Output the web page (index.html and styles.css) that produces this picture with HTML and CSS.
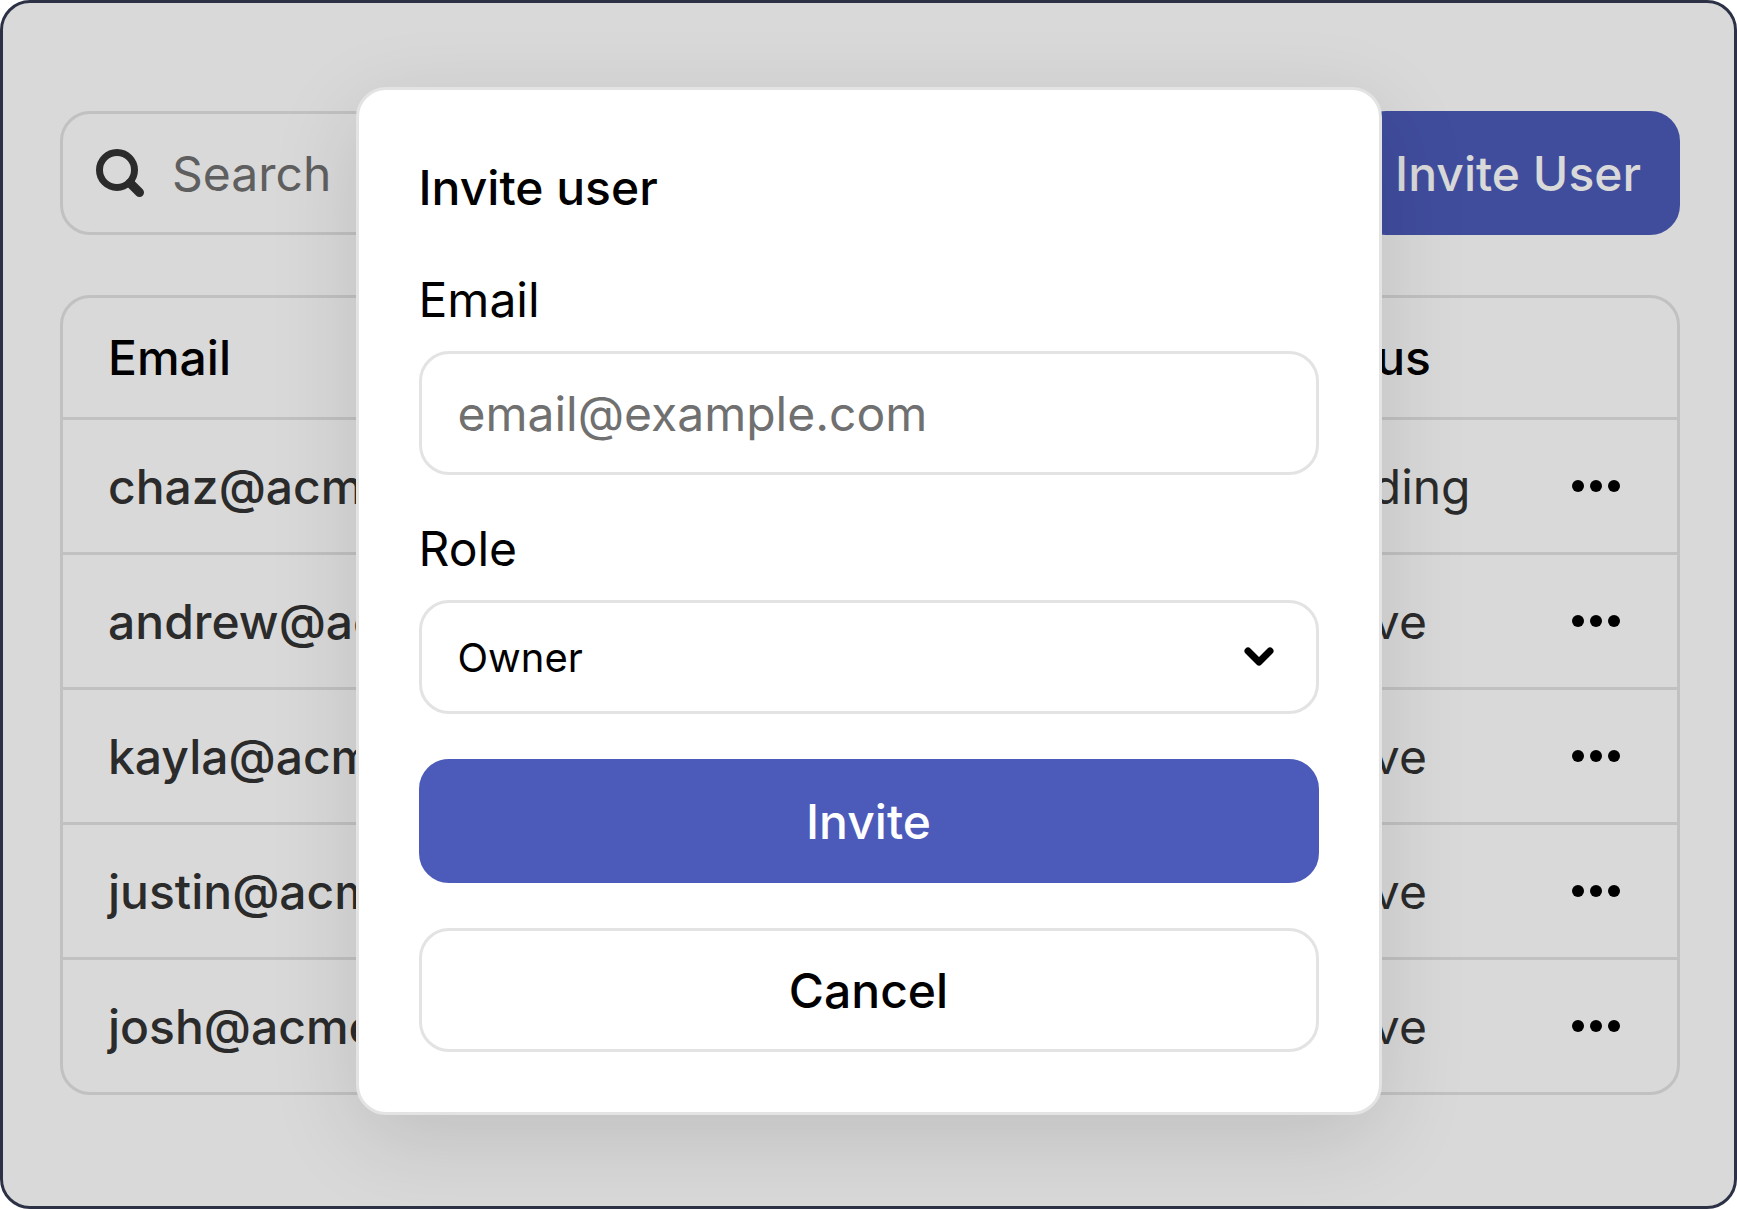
FILE: index.html
```html
<!DOCTYPE html>
<html lang="en">
<head>
	<meta charset="utf-8">
	<meta name="viewport" content="width=device-width, initial-scale=1">
	<title>Users</title>
	<link rel="stylesheet" href="styles.css">
</head>
<body>
	<div class="frame">
		<!-- users page -->
		<main class="page">
			<div class="toolbar">
				<label class="search">
					<svg class="search-icon" viewBox="0 0 48 48" aria-hidden="true">
						<circle cx="21" cy="21" r="17.5" />
						<path d="M34 34l9.5 9.5" class="handle" />
					</svg>
					<input type="search" placeholder="Search" aria-label="Search">
				</label>
				<button type="button" class="btn btn-primary">Invite User</button>
			</div>
			<div class="table-box">
				<table class="users">
					<thead>
						<tr>
							<th class="col-email">Email</th>
							<th class="col-status">Status</th>
							<th class="col-menu"></th>
						</tr>
					</thead>
					<tbody>
						<tr>
							<td class="email">chaz@acme.com</td>
							<td>Pending</td>
							<td><button type="button" class="more" aria-label="More"><svg viewBox="0 0 48 12"><circle cx="6" cy="6" r="6" /><circle cx="24" cy="6" r="6" /><circle cx="42" cy="6" r="6" /></svg></button></td>
						</tr>
						<tr>
							<td class="email">andrew@acme.com</td>
							<td>Active</td>
							<td><button type="button" class="more" aria-label="More"><svg viewBox="0 0 48 12"><circle cx="6" cy="6" r="6" /><circle cx="24" cy="6" r="6" /><circle cx="42" cy="6" r="6" /></svg></button></td>
						</tr>
						<tr>
							<td class="email">kayla@acme.com</td>
							<td>Active</td>
							<td><button type="button" class="more" aria-label="More"><svg viewBox="0 0 48 12"><circle cx="6" cy="6" r="6" /><circle cx="24" cy="6" r="6" /><circle cx="42" cy="6" r="6" /></svg></button></td>
						</tr>
						<tr>
							<td class="email">justin@acme.com</td>
							<td>Active</td>
							<td><button type="button" class="more" aria-label="More"><svg viewBox="0 0 48 12"><circle cx="6" cy="6" r="6" /><circle cx="24" cy="6" r="6" /><circle cx="42" cy="6" r="6" /></svg></button></td>
						</tr>
						<tr>
							<td class="email">josh@acme.com</td>
							<td>Active</td>
							<td><button type="button" class="more" aria-label="More"><svg viewBox="0 0 48 12"><circle cx="6" cy="6" r="6" /><circle cx="24" cy="6" r="6" /><circle cx="42" cy="6" r="6" /></svg></button></td>
						</tr>
					</tbody>
				</table>
			</div>
		</main>

		<!-- invite dialog -->
		<div class="overlay">
			<form class="dialog" role="dialog" aria-labelledby="dialog-title">
				<h2 id="dialog-title">Invite user</h2>
				<div class="field">
					<label for="email">Email</label>
					<input type="email" id="email" class="control" placeholder="email@example.com">
				</div>
				<div class="field">
					<label for="role">Role</label>
					<div class="select">
						<select id="role" class="control">
							<option>Owner</option>
							<option>Admin</option>
							<option>Member</option>
						</select>
						<svg class="chevron" viewBox="0 0 32 20" aria-hidden="true">
							<path d="M5 5l11 11L27 5" />
						</svg>
					</div>
				</div>
				<button type="button" class="btn btn-primary">Invite</button>
				<button type="button" class="btn">Cancel</button>
			</form>
		</div>
	</div>
</body>
</html>
```
FILE: styles.css
```css
* {
	box-sizing: border-box;
	margin: 0;
	padding: 0;
}

body {
	background-color: #fff;
	color: #000;
	font-family: Inter, "Liberation Sans", sans-serif;
	font-size: 48px;
}

input,
select,
button {
	font: inherit;
	color: inherit;
	outline: none;
}

input::placeholder {
	color: #707070;
	opacity: 1;
}

.frame {
	position: relative;
	min-height: 100vh;
	border: 3px solid #2d3145;
	border-radius: 30px;
	overflow: hidden;
}

.page {
	padding: 108px 54px 60px 57px;
}

/* toolbar */
.toolbar {
	display: flex;
	gap: 45px;
	margin-bottom: 60px;
}

.search {
	flex: 1;
	display: flex;
	align-items: center;
	gap: 28px;
	height: 124px;
	padding: 0 33px;
	border: 3px solid #e3e3e3;
	border-radius: 30px;
}

.search input {
	flex: 1;
	min-width: 0;
	border: 0;
	background: none;
}

.search-icon {
	width: 48px;
	height: 48px;
	fill: none;
	stroke: #333;
	stroke-width: 7;
	stroke-linecap: round;
}

.search-icon .handle {
	stroke-width: 9;
}

.btn {
	height: 124px;
	padding: 0 36px;
	border: 3px solid #e3e3e3;
	border-radius: 30px;
	background-color: #fff;
	font-weight: 500;
	cursor: pointer;
}

.btn-primary {
	border-color: #4c5bb9;
	background-color: #4c5bb9;
	color: #fff;
}

/* users table */
.table-box {
	border: 3px solid #e3e3e3;
	border-radius: 30px;
}

.users {
	width: 100%;
	table-layout: fixed;
	border-spacing: 0;
	color: #333;
	text-align: left;
}

.users th,
.users td {
	height: 135px;
	padding: 0 45px;
	border-bottom: 3px solid #e3e3e3;
}

.users th {
	height: 122px;
	color: #000;
	font-weight: 500;
}

.users tbody tr:last-child td {
	height: 132px;
	border-bottom: 0;
}

.users .email {
	font-weight: 500;
}

.col-status {
	width: 287px;
}

.col-menu {
	width: 150px;
}

.more {
	display: block;
	border: 0;
	background: none;
	cursor: pointer;
}

.more svg {
	display: block;
	width: 48px;
	height: 12px;
}

/* invite dialog */
.overlay {
	position: absolute;
	inset: 0;
	display: flex;
	justify-content: center;
	align-items: flex-start;
	padding-top: 84px;
	background-color: rgba(0, 0, 0, .15);
}

.dialog {
	display: flex;
	flex-direction: column;
	gap: 45px;
	width: 100%;
	max-width: 1026px;
	padding: 60px;
	border: 3px solid #e3e3e3;
	border-radius: 30px;
	background-color: #fff;
	box-shadow: 0 24px 90px rgba(0, 0, 0, .12);
}

.dialog h2 {
	font-size: 48px;
	line-height: 76px;
	font-weight: 500;
}

.field {
	display: flex;
	flex-direction: column;
	gap: 22px;
}

.field label {
	line-height: 58px;
}

.control {
	width: 100%;
	height: 124px;
	padding: 0 36px;
	border: 3px solid #e3e3e3;
	border-radius: 30px;
	background-color: #fff;
}

.select {
	position: relative;
}

.select .control {
	display: block;
	height: 114px;
	font-size: 40px;
	appearance: none;
}

.chevron {
	position: absolute;
	top: 46px;
	right: 44px;
	width: 32px;
	height: 20px;
	fill: none;
	stroke: #000;
	stroke-width: 7;
	stroke-linecap: round;
	stroke-linejoin: round;
	pointer-events: none;
}
```
